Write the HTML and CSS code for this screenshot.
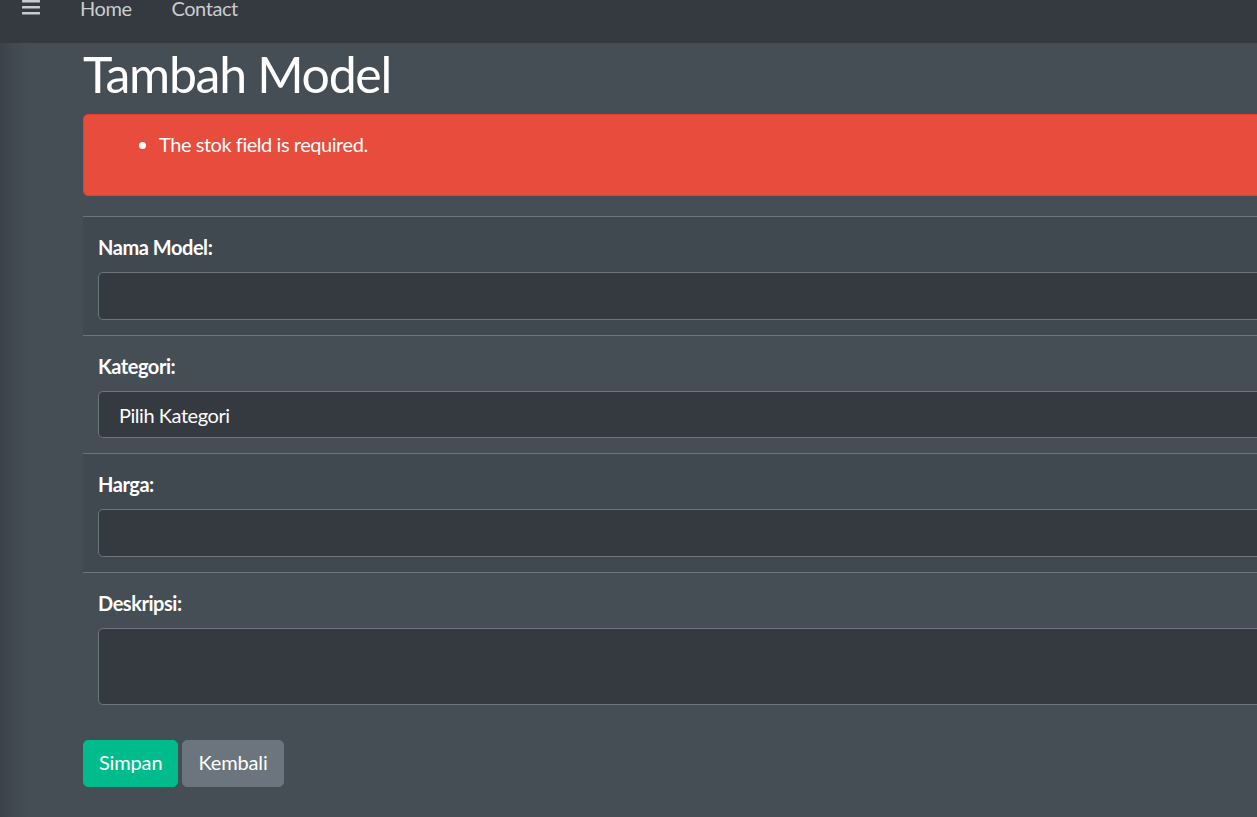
FILE: index.html
```html
<!DOCTYPE html>
<html lang="id">
<head>
<meta charset="utf-8">
<title>Tambah Model</title>
<link rel="stylesheet" href="styles.css">
</head>
<body>
<div class="wrapper">
  <nav class="navbar">
    <a class="nav-toggle" href="#" aria-label="menu">
      <svg width="18" height="15" viewBox="0 0 18 15"><rect x="0" y="0" width="18" height="2.5" rx="0.5"/><rect x="0" y="6" width="18" height="2.5" rx="0.5"/><rect x="0" y="12" width="18" height="2.5" rx="0.5"/></svg>
    </a>
    <a class="nav-link" href="#">Home</a>
    <a class="nav-link" href="#">Contact</a>
  </nav>
  <main class="content">
    <div class="container">
      <h1 class="title">Tambah Model</h1>
      <div class="alert">
        <ul>
          <li>The stok field is required.</li>
        </ul>
      </div>
      <form class="form">
        <div class="rows">
          <div class="row striped">
            <label class="label">Nama Model:</label>
            <input class="control" type="text">
          </div>
          <div class="row">
            <label class="label">Kategori:</label>
            <select class="control select"><option>Pilih Kategori</option></select>
          </div>
          <div class="row striped">
            <label class="label">Harga:</label>
            <input class="control" type="text">
          </div>
          <div class="row">
            <label class="label">Deskripsi:</label>
            <textarea class="control textarea" rows="2"></textarea>
          </div>
        </div>
        <div class="actions">
          <button type="button" class="btn btn-success">Simpan</button>
          <button type="button" class="btn btn-secondary">Kembali</button>
        </div>
      </form>
    </div>
  </main>
</div>
</body>
</html>
```
FILE: styles.css
```css
html, body {
  margin: 0;
  padding: 0;
  height: 100%;
  overflow: hidden;
}
body {
  background: #454d55;
  font-family: "Lato", "Liberation Sans", sans-serif;
  font-size: 20px;
  line-height: 1.5;
  letter-spacing: -0.45px;
  color: #fff;
}
.wrapper {
  min-height: 100%;
  background: linear-gradient(to right, #3b4147 0, #41484f 12px, #454d55 28px);
}
.navbar {
  height: 43px;
  background: #343a40;
  display: flex;
  align-items: flex-start;
  padding-left: 22px;
  box-sizing: border-box;
}
.nav-toggle {
  display: block;
  width: 18px;
  height: 15px;
  margin-right: 40px;
  line-height: 0;
}
.nav-toggle svg { fill: #c8cbcf; }
.nav-link {
  color: rgba(255,255,255,.75);
  text-decoration: none;
  line-height: 17px;
  margin-right: 40px;
}
.content {
  padding-left: 83px;
}
.container {
  width: 1400px;
}
.title {
  margin: 0 0 10px;
  font-size: 50px;
  font-weight: 400;
  line-height: 1.2;
  letter-spacing: -1.3px;
  padding-top: 1px;
}
.alert {
  background: #e74c3c;
  border: 1px solid #e3402f;
  border-radius: 5px;
  padding: 15px 25px;
  margin-bottom: 20px;
}
.alert ul {
  margin: 0 0 20px;
  padding-left: 50px;
}
.alert li {
  position: relative;
  top: -1px;
}
.rows {
  margin-bottom: 20px;
}
.row {
  border-top: 1px solid #6c757d;
  padding: 15px;
}
.row.striped {
  background: rgba(0,0,0,.05);
}
.label {
  display: block;
  font-weight: 700;
  margin-bottom: 10px;
}
.control {
  display: block;
  box-sizing: border-box;
  width: 100%;
  height: 48px;
  padding: 7.5px 15px;
  background: #343a40;
  border: 1px solid #6c757d;
  border-radius: 5px;
  color: #fff;
  font: inherit;
  letter-spacing: inherit;
  margin: 0;
}
.select {
  appearance: none;
  -webkit-appearance: none;
  height: 47px;
  padding-left: 20px;
}
.textarea {
  height: 77px;
  resize: none;
}
.actions {
  display: flex;
  gap: 4px;
}
.btn {
  font: inherit;
  letter-spacing: -0.15px;
  color: #fff;
  border: 1px solid transparent;
  border-radius: 5px;
  padding: 6px 15px 9px;
  height: 47px;
  line-height: 30px;
  cursor: pointer;
}
.btn-success {
  background: #00bc8c;
  border-color: #00bc8c;
}
.btn-secondary {
  background: #6c757d;
  border-color: #6c757d;
}
```
